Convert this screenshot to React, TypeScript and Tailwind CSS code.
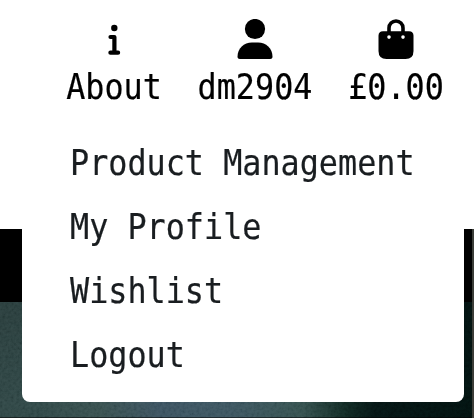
const LABEL =
  "block h-8 origin-center scale-y-[1.12] whitespace-pre text-[31.8px] leading-8 [-webkit-text-stroke:0.2px_currentColor]";

const menuItems = ["Product Management", "My Profile", "Wishlist", "Logout"];

function InfoIcon() {
  return (
    <svg className="h-10 w-9" viewBox="0 0 36 40" fill="none" stroke="currentColor">
      <circle cx="18.3" cy="9" r="3.2" fill="currentColor" stroke="none" />
      <path d="M14.500 18H18.400V33.500M14.400 33.700H22.100" strokeWidth="4.2" strokeLinecap="round" strokeLinejoin="round" />
    </svg>
  );
}

function UserIcon() {
  return (
    <svg className="h-10 w-9" viewBox="0 0 36 40" fill="currentColor">
      <circle cx="18" cy="10" r="10.1" />
      <path d="M14.9 23.6H21.1C29 23.6 35.5 29.7 35.5 37.7C35.5 39 34.5 40 33.2 40H2.8C1.5 40 .5 39 .5 37.7C.5 29.7 7 23.6 14.9 23.6Z" />
    </svg>
  );
}

function BagIcon() {
  return (
    <svg className="h-10 w-9" viewBox="0 0 36 40" fill="currentColor">
      <path d="M11 15V9A7 7 0 0 1 25 9V15" fill="none" stroke="currentColor" strokeWidth="3.6" />
      <path d="M5 12.3H31Q35.5 12.3 35.5 16.8V32Q35.5 40 27.5 40H8.5Q.5 40 .5 32V16.8Q.5 12.3 5 12.3Z" />
      <circle cx="11" cy="18.1" r="1.8" fill="white" />
      <circle cx="25" cy="18.1" r="1.8" fill="white" />
    </svg>
  );
}

export default function App() {
  return (
    <div className="relative h-[418px] w-[474px] overflow-hidden bg-white font-['DejaVu_Sans_Mono',monospace] text-black">
      <div className="flex h-full flex-col pt-[229px]">
        <div className="h-[73px] bg-black" />
        <div className="relative flex-1 bg-[linear-gradient(90deg,#304746_0px,#304847_40px,#38504f_100px,#3b5260_160px,#3c5560_230px,#35514f_300px,#112923_345px,#061514_375px,#031210_474px)]">
          <div className="absolute inset-y-0 left-0 w-[22px] bg-linear-to-b from-black/15 to-transparent" />
          <svg className="absolute inset-0 h-full w-full opacity-15 mix-blend-soft-light">
            <filter id="grain">
              <feTurbulence type="fractalNoise" baseFrequency="0.35" numOctaves="2" />
              <feColorMatrix values="1.6 0 0 0 -.3 1.6 0 0 0 -.3 1.6 0 0 0 -.3 0 0 0 0 1" />
            </filter>
            <rect width="100%" height="100%" filter="url(#grain)" />
          </svg>
          <div className="absolute inset-x-0 bottom-0 h-px bg-black/50" />
        </div>
      </div>
      <div className="absolute top-[229px] right-0 h-[189px] w-[2px] bg-[#3b3d38]" />

      <div className="absolute top-0 left-[22px] h-[402px] w-[442px] rounded-b-lg bg-white">
        <nav className="flex gap-9 pt-[19px] pl-[44px]">
          <a className="flex w-[96px] flex-col items-center">
            <InfoIcon />
            <span className={`${LABEL} mt-3`}>About</span>
          </a>
          <a className="flex w-[114px] flex-col items-center">
            <UserIcon />
            <span className={`${LABEL} mt-3`}>dm2904</span>
          </a>
          <a className="flex w-[96px] flex-col items-center">
            <BagIcon />
            <span className={`${LABEL} mt-3`}>£0.00</span>
          </a>
        </nav>
        <ul className="flex flex-col gap-8 pt-[44px] pl-[48px] text-[#191d20]">
          {menuItems.map((item) => (
            <li key={item} className={LABEL}>{item}</li>
          ))}
        </ul>
      </div>
    </div>
  );
}
